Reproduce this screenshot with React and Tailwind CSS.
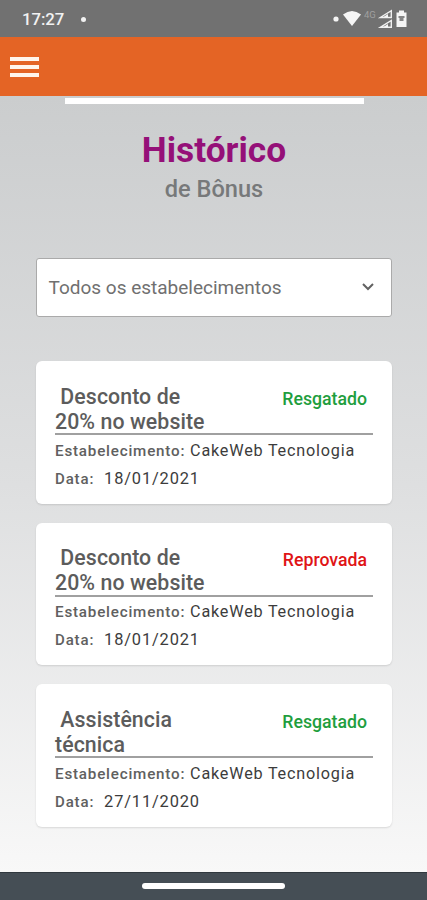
const items = [
  { lines: ['Desconto de', '20% no website'], status: 'Resgatado', date: '18/01/2021' },
  { lines: ['Desconto de', '20% no website'], status: 'Reprovada', date: '18/01/2021' },
  { lines: ['Assistência', 'técnica'], status: 'Resgatado', date: '27/11/2020' },
];

function StatusBar() {
  return (
    <div className="flex h-[37px] shrink-0 items-center bg-[#717171] pl-[22px] pr-[19px] pt-[1px] text-white">
      <span className="text-[16.800px] font-medium leading-none tracking-[-0.1px] text-[#f2f2f2]">17:27</span>
      <span className="ml-[17px] size-[5px] rounded-full bg-[#f2f2f2]" />
      <svg className="ml-auto h-[22px] w-[76px]" viewBox="332 8 76 22" fill="#f5f5f5">
        <circle cx="336" cy="19" r="2.6" />
        <path d="M343 14.5Q352 7.5 361 14.5L352 26Z" />
        <text x="364" y="17.5" fontSize="9.500" fill="#a0a0a0" fontFamily="Roboto">4G</text>
        <path d="M391.300 10.700v6.800h-11Z" fill="none" stroke="#f0f0f0" strokeWidth="1.400" />
        <path d="M388 14v3h-4.500Z" />
        <path d="M391.300 20.500v6.800h-11Z" fill="none" stroke="#f0f0f0" strokeWidth="1.400" />
        <path d="M388 24v3h-4.500Z" />
        <path d="M399 10.500h5v2h2.500v14.500h-10v-14.500h2.500Z" />
        <path d="M398.500 16h6v2h-1v3h-4v-3h-1Z" fill="#858585" />
      </svg>
    </div>
  );
}

function Card({ lines, status, date }) {
  return (
    <article className="h-[142.500px] rounded-[6px] bg-white px-[19px] pt-[22.500px] shadow-[0_1px_2px_rgba(0,0,0,0.12)]">
      <div className="flex h-[51.500px] justify-between border-b-2 border-[#a0a0a0]">
        <h2 className="whitespace-pre text-[21.300px] font-medium leading-[25px] tracking-[0.080px] text-[#5c5c5c]">
          {' ' + lines[0]}
          <br />
          {lines[1]}
        </h2>
        <span
          className={`pr-[6px] pt-[3px] text-[17.700px] font-medium leading-[24px] ${
            status === 'Reprovada' ? 'text-[#e01416]' : 'text-[#1f9e3e]'
          }`}
        >
          {status}
        </span>
      </div>
      <p className="mt-[1.500px] whitespace-pre text-[16.200px] leading-[28px] tracking-[0.800px] text-[#3c3c3c]">
        <b className="text-[15.200px] font-medium text-[#606060]">Estabelecimento:</b> CakeWeb Tecnologia
      </p>
      <p className="whitespace-pre text-[16.400px] leading-[28px] tracking-[0.860px] text-[#3c3c3c]">
        <b className="text-[15px] font-medium text-[#606060]">Data:</b>{'  ' + date}
      </p>
    </article>
  );
}

export default function App() {
  return (
    <div className="flex h-[900px] w-[427px] flex-col overflow-hidden font-['Roboto',sans-serif]">
      <StatusBar />
      <header className="flex h-[59px] shrink-0 items-center bg-[#e46425] pl-[10px]">
        <button aria-label="Menu" className="flex w-[29px] flex-col gap-1">
          <span className="h-[4px] bg-[#fff5ec]" />
          <span className="h-[4px] bg-[#fff5ec]" />
          <span className="h-[4px] bg-[#fff5ec]" />
        </button>
      </header>
      <main className="flex h-[776px] shrink-0 flex-col bg-linear-to-b from-[#cbcdce] via-[#dedfe0] to-[#f8f8f8] pl-[36px] pr-[35px] pt-[2px]">
        <div className="ml-[29px] mr-[28px] h-[6px] shrink-0 bg-white" />
        <div className="mt-[24px] text-center">
          <h1 className="text-[35.300px] font-bold leading-[45px] text-[#951078]">Histórico</h1>
          <p className="text-[23.600px] font-medium leading-[33px] text-[#77797a]">de Bônus</p>
        </div>
        <button className="mt-[52px] flex h-[59px] shrink-0 items-center justify-between rounded-[3px] border border-[#aaa] bg-white pl-[11.500px] pr-[17px] text-[19px] text-[#707070]">
          <span className="pt-[1px]">Todos os estabelecimentos</span>
          <svg className="-mt-[2px] h-[8px] w-[12px]" viewBox="0 0 12 8" fill="none" stroke="#626262" strokeWidth="2">
            <path d="M1 1l5 5 5-5" />
          </svg>
        </button>
        <div className="mt-[44px] flex flex-col gap-[19.200px]">
          {items.map((item, i) => (
            <Card key={i} {...item} />
          ))}
        </div>
      </main>
      <footer className="flex h-[28px] shrink-0 justify-center border-t border-[#30383e] bg-[#454e55] pt-[10px]">
        <div className="h-[6px] w-[143px] rounded-full bg-white" />
      </footer>
    </div>
  );
}
